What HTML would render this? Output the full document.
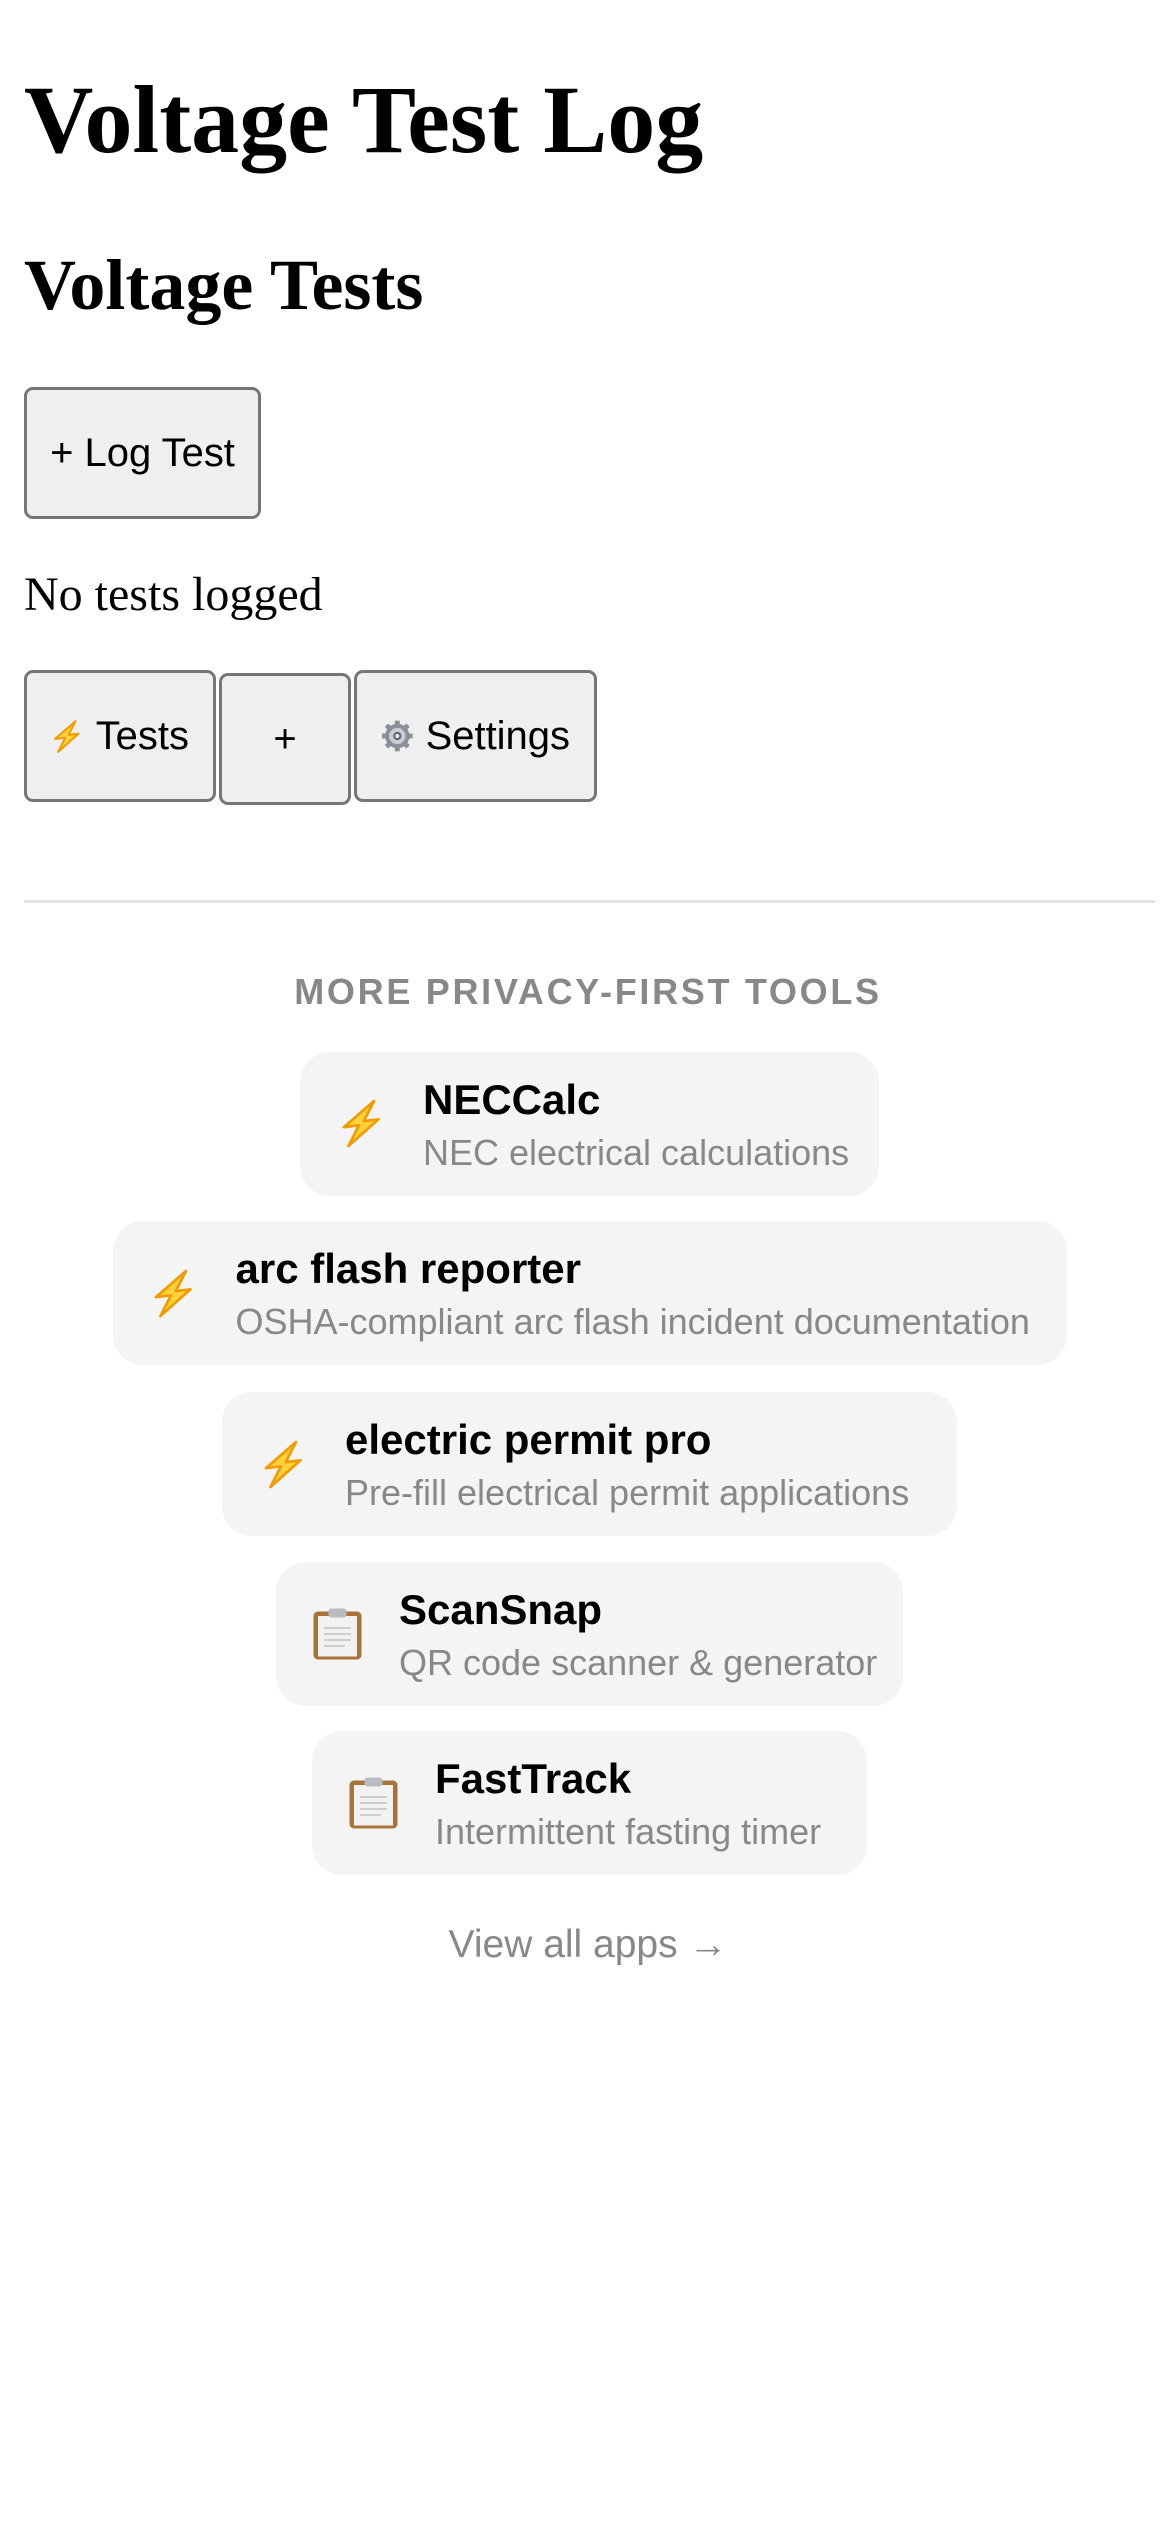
<!DOCTYPE html>
<html><head><meta charset="utf-8">
<style>
html{zoom:3;}
body{margin:8px;font-family:"Liberation Serif",serif;color:#000;background:#fff;width:374px;min-height:820px;}
h1{font-size:32px;margin:21.44px 0;font-weight:bold;}
h2{font-size:24px;margin:23px 0 19.92px;font-weight:bold;}
p{font-size:16px;margin:16px 0;}
button{font-family:"Liberation Sans",Arial,sans-serif;font-size:13.33px;background:#efefef;border:1px solid #767676;border-radius:3px;padding:1px 8px;min-height:44px;min-width:44px;color:#000;display:inline-flex;align-items:center;justify-content:center;gap:4px;box-sizing:border-box;white-space:nowrap;}
.nav{display:flex;gap:1px;align-items:flex-start;}
.nav button{height:44px;}
.bolt{width:13px;height:15px;}
.cb{width:16px;height:19px;}
.foot{position:absolute;left:0;top:0;width:390px;font-family:"Liberation Sans",Arial,sans-serif;}
.hr{position:absolute;left:8px;top:300px;width:377px;height:1px;background:#e3e3e3;}
.ttl{position:absolute;left:0;width:392px;top:323.5px;text-align:center;font-size:12px;font-weight:bold;letter-spacing:0.9px;color:#888;}
.card{position:absolute;height:48px;background:#f4f4f4;border-radius:10px;box-sizing:border-box;display:flex;align-items:center;padding:0 12px 0 12px;}
.ic{width:17px;height:20px;margin-right:12px;flex:none;display:flex;align-items:center;justify-content:center;}
.t{font-size:14px;font-weight:bold;line-height:16px;color:#000;white-space:nowrap;margin-top:1px;}
.d{font-size:12px;line-height:15px;color:#888;margin-top:2px;white-space:nowrap;}
.va{position:absolute;left:0;width:392px;top:641px;text-align:center;font-size:13px;color:#888;}
</style></head><body>
<h1>Voltage Test Log</h1>
<h2>Voltage Tests</h2>
<button style="width:79px">+ Log Test</button>
<p>No tests logged</p>
<div class="nav">
<button style="width:64px"><svg class="bolt" viewBox="0 0 16 16"><path d="M12 0.5 L2 9.2 L7 8.6 L3.5 15.5 L13.5 6.6 L8.6 7.2 Z" fill="#ffd23a" stroke="#f29b00" stroke-width="1" stroke-linejoin="round"/></svg>Tests</button>
<button style="width:43px;margin-top:1px">+</button>
<button style="width:81px"><svg width="14" height="14" viewBox="0 0 16 16"><g fill="#8a8f98"><circle cx="8" cy="8" r="6"/><g stroke="#8a8f98" stroke-width="2.4"><line x1="8" y1="0.5" x2="8" y2="15.5"/><line x1="0.5" y1="8" x2="15.5" y2="8"/><line x1="2.7" y1="2.7" x2="13.3" y2="13.3"/><line x1="13.3" y1="2.7" x2="2.7" y2="13.3"/></g></g><circle cx="8" cy="8" r="4" fill="#c9ced6"/><circle cx="8" cy="8" r="2" fill="#5a6068"/><circle cx="8" cy="8" r="1" fill="#e8ecf0"/></svg>Settings</button>
</div>

<div class="foot">
<div class="hr"></div>
<div class="ttl">MORE PRIVACY-FIRST TOOLS</div>

<div class="card" style="left:100px;top:350.5px;width:193px">
<div class="ic"><svg class="cb" viewBox="0 0 16 16"><path d="M12 0.5 L2 9.2 L7 8.6 L3.5 15.5 L13.5 6.6 L8.6 7.2 Z" fill="#ffd23a" stroke="#f29b00" stroke-width="0.9" stroke-linejoin="round"/></svg></div>
<div><div class="t">NECCalc</div><div class="d">NEC electrical calculations</div></div></div>

<div class="card" style="left:37.5px;top:407px;width:318px">
<div class="ic"><svg class="cb" viewBox="0 0 16 16"><path d="M12 0.5 L2 9.2 L7 8.6 L3.5 15.5 L13.5 6.6 L8.6 7.2 Z" fill="#ffd23a" stroke="#f29b00" stroke-width="0.9" stroke-linejoin="round"/></svg></div>
<div><div class="t">arc flash reporter</div><div class="d">OSHA-compliant arc flash incident documentation</div></div></div>

<div class="card" style="left:74px;top:464px;width:245px">
<div class="ic"><svg class="cb" viewBox="0 0 16 16"><path d="M12 0.5 L2 9.2 L7 8.6 L3.5 15.5 L13.5 6.6 L8.6 7.2 Z" fill="#ffd23a" stroke="#f29b00" stroke-width="0.9" stroke-linejoin="round"/></svg></div>
<div><div class="t">electric permit pro</div><div class="d">Pre-fill electrical permit applications</div></div></div>

<div class="card" style="left:92px;top:520.5px;width:209px">
<div class="ic"><svg width="17" height="18" viewBox="0 0 17 18"><rect x="0.5" y="1.5" width="16" height="16" rx="1.5" fill="#a8733a"/><rect x="2" y="3" width="13" height="13.5" fill="#f2f2f2"/><rect x="5.5" y="0.5" width="6" height="3" rx="1" fill="#b8bcc2"/><g stroke="#c8c8c8" stroke-width="0.6"><line x1="4" y1="7" x2="13" y2="7"/><line x1="4" y1="9" x2="13" y2="9"/><line x1="4" y1="11" x2="13" y2="11"/><line x1="4" y1="13" x2="11" y2="13"/></g></svg></div>
<div><div class="t">ScanSnap</div><div class="d">QR code scanner &amp; generator</div></div></div>

<div class="card" style="left:104px;top:577px;width:185px">
<div class="ic"><svg width="17" height="18" viewBox="0 0 17 18"><rect x="0.5" y="1.5" width="16" height="16" rx="1.5" fill="#a8733a"/><rect x="2" y="3" width="13" height="13.5" fill="#f2f2f2"/><rect x="5.5" y="0.5" width="6" height="3" rx="1" fill="#b8bcc2"/><g stroke="#c8c8c8" stroke-width="0.6"><line x1="4" y1="7" x2="13" y2="7"/><line x1="4" y1="9" x2="13" y2="9"/><line x1="4" y1="11" x2="13" y2="11"/><line x1="4" y1="13" x2="11" y2="13"/></g></svg></div>
<div><div class="t">FastTrack</div><div class="d">Intermittent fasting timer</div></div></div>

<div class="va">View all apps →</div>
</div>
</body></html>
